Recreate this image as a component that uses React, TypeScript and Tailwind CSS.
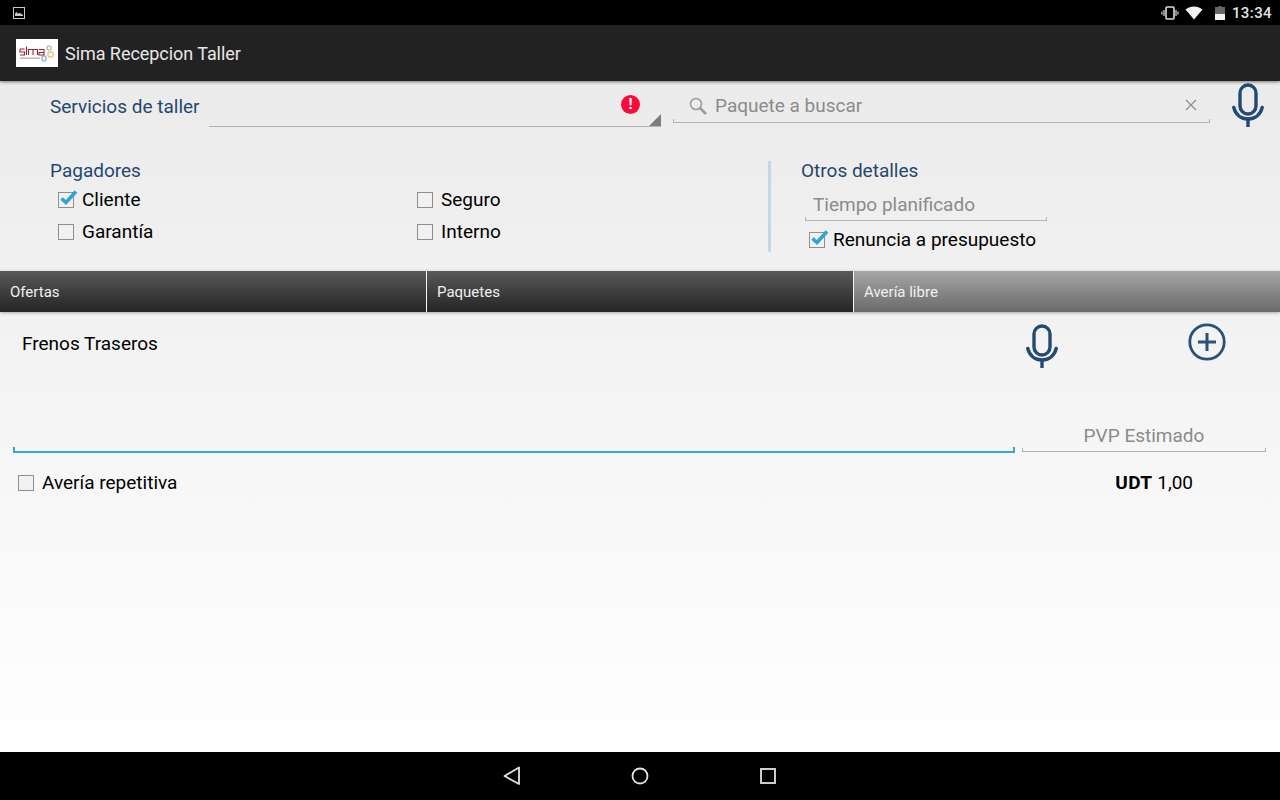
const Mic = ({ className }: { className: string }) => (
  <svg className={className} viewBox="0 0 32 46" fill="none" stroke="#234a72" strokeWidth="3.4" strokeLinecap="round">
    <rect x="8" y="2" width="16" height="29" rx="8" />
    <path d="M1.8 24.5C3.5 31.5 9 36 16 36S28.5 31.5 30.2 24.5" />
    <path d="M16 36V44" strokeLinecap="butt" />
  </svg>
);

const Check = ({ checked = false }: { checked?: boolean }) => (
  <span className="relative block w-[16px] h-[16px] shrink-0 border border-[#8f8f8f] bg-[#f1f1f1]">
    {checked && (
      <svg className="absolute left-[0px] top-[-4px] w-[19px] h-[18px]" viewBox="0 0 19 18" fill="none">
        <path d="M2.5 9.5L7 13.5L17 2.5" stroke="#2ea5d6" strokeWidth="3.6" />
      </svg>
    )}
  </span>
);

const CheckRow = ({ label, checked, className = "" }: { label: string; checked?: boolean; className?: string }) => (
  <div className={`flex items-center gap-[8px] text-[19px] leading-[32px] text-black ${className}`}>
    <Check checked={checked} />
    <span>{label}</span>
  </div>
);

const Field = ({ className, children }: { className: string; children?: React.ReactNode }) => (
  <div className={`relative border-b border-[#b4b4b4] ${className}`}>
    <span className="absolute left-0 bottom-0 w-px h-[3px] bg-[#b4b4b4]" />
    <span className="absolute right-0 bottom-0 w-px h-[3px] bg-[#b4b4b4]" />
    {children}
  </div>
);

export default function App() {
  return (
    <div className="w-[1280px] h-[800px] flex flex-col overflow-hidden font-['Roboto',sans-serif]">
      {/* status bar */}
      <div className="h-[25px] bg-black flex items-center shrink-0 pl-[13px] pr-[8px]">
        <svg className="w-[12px] h-[12px]" viewBox="0 0 12 12" fill="none">
          <rect x="0.5" y="0.5" width="11" height="11" stroke="#c8c8c8" />
          <path d="M2 9V6.5L3.5 5L5 6.5L7 6L10 8V9Z" fill="#c8c8c8" />
        </svg>
        <div className="ml-auto flex items-center">
          <svg className="w-[18px] h-[14px]" viewBox="0 0 18 14" fill="none" stroke="#dcdcdc">
            <rect x="5" y="1" width="8" height="12" rx="1" strokeWidth="1.6" />
            <path d="M3 4V10M1 5.5V8.5M15 4V10M17 5.5V8.5" strokeWidth="1.2" />
          </svg>
          <svg className="w-[18px] h-[14px] ml-[6px]" viewBox="0 0 18 14">
            <path d="M0.5 3.5C5.5 -0.5 12.5 -0.5 17.5 3.5L9 13.5Z" fill="#f2f2f2" />
          </svg>
          <svg className="w-[10px] h-[14px] ml-[12px]" viewBox="0 0 10 14">
            <path d="M3.5 0H6.5V1H10V14H0V1H3.5Z" fill="#666" />
            <rect x="0" y="8" width="10" height="6" fill="#f2f2f2" />
          </svg>
          <span className="ml-[7px] mt-[1px] text-[15px] font-medium text-[#e4e4e4] tracking-[0.4px]">13:34</span>
        </div>
      </div>

      {/* app bar */}
      <div className="h-[56px] shrink-0 bg-[#222222] flex items-center pl-[16px] shadow-[0_1px_3px_rgba(0,0,0,0.5)] relative">
        <div className="w-[42px] h-[28px] bg-white flex flex-col justify-center pl-[3px]">
          <svg className="w-[36px] h-[24px]" viewBox="0 0 36 24" fill="none">
            <path d="M1 8H5.5V8M1 8V11H5.5V14H1M7.5 5.5V14M9.5 14V8.5H14V14M14 8.5H18.5V14M20 8.5H25V14H20V11.5H25" stroke="#a01f35" strokeWidth="1.1" />
            <rect x="1" y="16.5" width="20" height="1.4" fill="#b5b5b5" />
            <rect x="28" y="5" width="4" height="4" rx="1" stroke="#8db05a" />
            <rect x="29" y="11" width="5" height="5" rx="1" stroke="#e8a04a" />
            <rect x="23" y="15" width="4" height="5" rx="1" stroke="#4b9fc4" />
          </svg>
        </div>
        <span className="ml-[7px] text-[18px] tracking-[-0.05px] text-[#e8e8e8]">Sima Recepcion Taller</span>
      </div>

      {/* content */}
      <div className="flex-1 flex flex-col bg-gradient-to-b from-[#ebebeb] to-[#ffffff] min-h-0">
        <div className="h-[190px] shrink-0 pt-[2px]">
          {/* search row */}
          <div className="h-[44px] flex items-start pl-[50px]">
            <span className="w-[159px] mt-[10px] text-[19px] leading-[27px] text-[#24476f] whitespace-nowrap">Servicios de taller</span>
            <div className="relative w-[452px] h-[44px] border-b border-[#b4b4b4]">
              <span className="absolute right-[21px] top-[12px] w-[19px] h-[19px] rounded-full bg-[#fb0a3c] text-white text-[15px] font-bold leading-[19px] text-center">!</span>
              <span className="absolute right-0 bottom-0 w-0 h-0 border-l-[12px] border-b-[12px] border-l-transparent border-b-[#7d7d7d]" />
            </div>
            <Field className="w-[537px] h-[40px] ml-[12px]">
              <svg className="absolute left-[15px] top-[13px] w-[20px] h-[20px]" viewBox="0 0 20 20" fill="none" stroke="#9c9c9c">
                <circle cx="8" cy="8" r="5.5" strokeWidth="1.6" />
                <path d="M12 12L18 18" strokeWidth="2.6" />
              </svg>
              <span className="absolute left-[42px] top-[9px] text-[19px] leading-[27px] text-[#8b8b8b]">Paquete a buscar</span>
              <svg className="absolute right-[13px] top-[16px] w-[12px] h-[12px]" viewBox="0 0 12 12" stroke="#8c8c8c" strokeWidth="1.2">
                <path d="M1 1L11 11M11 1L1 11" />
              </svg>
            </Field>
            <Mic className="w-[32px] h-[46px] ml-[22px]" />
          </div>

          {/* payers */}
          <div className="flex mt-[30px]">
            <div className="w-[718px] ml-[50px] shrink-0">
              <div className="h-[27px] text-[19px] leading-[27px] text-[#24476f]">Pagadores</div>
              <div className="grid grid-cols-[359px_1fr] pl-[8px]">
                <CheckRow label="Cliente" checked />
                <CheckRow label="Seguro" />
                <CheckRow label="Garantía" />
                <CheckRow label="Interno" />
              </div>
            </div>
            <div className="w-[3px] h-[91px] mt-[4px] bg-[#c3d6ea] shrink-0" />
            <div className="ml-[30px]">
              <div className="h-[27px] text-[19px] leading-[27px] text-[#24476f]">Otros detalles</div>
              <Field className="w-[242px] h-[37px] ml-[4px] pl-[8px] pt-[7px] text-[19px] leading-[27px] text-[#8b8b8b]">Tiempo planificado</Field>
              <CheckRow label="Renuncia a presupuesto" checked className="ml-[8px] mt-[3px]" />
            </div>
          </div>
        </div>

        {/* tabs */}
        <div className="h-[41px] shrink-0 flex text-[15px] text-[#f0f0f0] shadow-[0_1px_3px_rgba(0,0,0,0.3)]">
          <div className="w-[427px] pl-[10px] pt-[1px] flex items-center border-r border-[#f5f5f5] bg-gradient-to-b from-[#5a5a5a] to-[#252525]">Ofertas</div>
          <div className="w-[427px] pl-[10px] pt-[1px] flex items-center border-r border-[#f5f5f5] bg-gradient-to-b from-[#5a5a5a] to-[#252525]">Paquetes</div>
          <div className="flex-1 pl-[10px] pt-[1px] flex items-center bg-gradient-to-b from-[#a6a6a6] to-[#6b6b6b]">Avería libre</div>
        </div>

        {/* description */}
        <div className="flex items-start pl-[13px] pr-[14px] h-[141px] shrink-0">
          <div className="relative w-[1002px] h-[141px] border-b-2 border-[#33a9d8]">
            <span className="absolute left-0 bottom-0 w-[2px] h-[4px] bg-[#33a9d8]" />
            <span className="absolute right-0 bottom-0 w-[2px] h-[4px] bg-[#33a9d8]" />
            <span className="absolute left-[9px] top-[18px] text-[19px] leading-[27px] text-black">Frenos Traseros</span>
            <Mic className="absolute left-[1013px] top-[12px] w-[32px] h-[46px]" />
          </div>
          <div className="relative ml-[7px] flex-1 h-[140px] flex flex-col justify-end">
            <svg className="absolute left-[165px] top-[10px] w-[40px] h-[40px]" viewBox="0 0 40 40" fill="none" stroke="#2c5178">
              <circle cx="20" cy="20" r="17.2" strokeWidth="2.8" />
              <path d="M20 11V29M11 20H29" strokeWidth="3" />
            </svg>
            <Field className="h-[36px] text-center pt-[6px] text-[19px] leading-[27px] text-[#8b8b8b]">PVP Estimado</Field>
          </div>
        </div>

        {/* repeat row */}
        <div className="flex items-center justify-between pl-[18px] pt-[14px] h-[46px]">
          <CheckRow label="Avería repetitiva" />
          <div className="mr-[87px] text-[19px] leading-[32px] text-black"><span className="font-bold tracking-[0.4px]">UDT</span> 1,00</div>
        </div>
      </div>

      {/* nav bar */}
      <div className="h-[48px] shrink-0 bg-black flex items-center justify-center gap-[104px]">
        <svg className="w-[24px] h-[24px]" viewBox="0 0 24 24" fill="none" stroke="#e4e4e4" strokeWidth="1.8">
          <path d="M19 3.5V20L4.5 12Z" strokeLinejoin="round" />
        </svg>
        <svg className="w-[24px] h-[24px]" viewBox="0 0 24 24" fill="none" stroke="#e4e4e4" strokeWidth="1.8">
          <circle cx="12" cy="12" r="7.5" />
        </svg>
        <svg className="w-[24px] h-[24px]" viewBox="0 0 24 24" fill="none" stroke="#e4e4e4" strokeWidth="1.8">
          <rect x="5" y="5" width="14" height="14" />
        </svg>
      </div>
    </div>
  );
}
